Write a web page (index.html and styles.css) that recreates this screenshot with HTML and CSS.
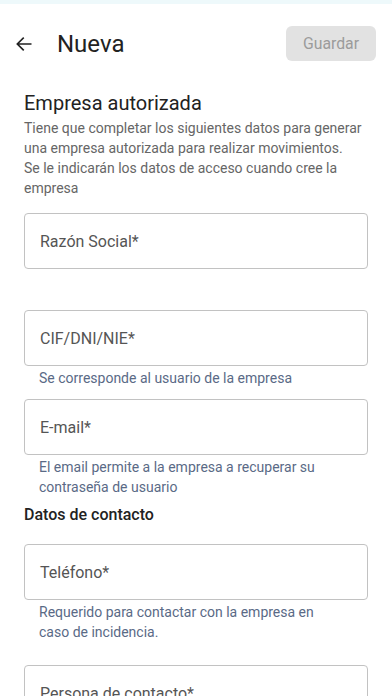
FILE: index.html
```html
<!DOCTYPE html>
<html lang="es">
<head>
<meta charset="utf-8">
<link rel="stylesheet" href="styles.css">
</head>
<body>
<div class="strip"></div>
<header class="bar">
  <div class="bar-left">
    <svg class="back" width="20" height="20" viewBox="0 0 24 24"><path d="M20 12H4.5M11 5l-7 7 7 7" fill="none" stroke="#222" stroke-width="2" stroke-linecap="square"/></svg>
    <h1 class="title">Nueva</h1>
  </div>
  <button class="save">Guardar</button>
</header>
<main class="content">
  <h2 class="section">Empresa autorizada</h2>
  <p class="desc">Tiene que completar los siguientes datos para generar<br>una empresa autorizada para realizar movimientos.<br>Se le indicarán los datos de acceso cuando cree la<br>empresa</p>

  <div class="field f-first"><span class="label">Razón Social*</span></div>

  <div class="field"><span class="label">CIF/DNI/NIE*</span></div>
  <p class="helper h-short">Se corresponde al usuario de la empresa</p>

  <div class="field"><span class="label">E-mail*</span></div>
  <p class="helper h-mid">El email permite a la empresa a recuperar su<br>contraseña de usuario</p>

  <h3 class="sub">Datos de contacto</h3>

  <div class="field"><span class="label">Teléfono*</span></div>
  <p class="helper h-long">Requerido para contactar con la empresa en<br>caso de incidencia.</p>

  <div class="field"><span class="label">Persona de contacto*</span></div>
</main>
</body>
</html>
```

FILE: styles.css
```css
html, body { margin: 0; padding: 0; background: #fff; }
body { font-family: Roboto, "Noto Sans", sans-serif; color: #222; width: 392px; height: 696px; overflow: hidden; }
.strip { height: 4px; background: #eef9fb; }
.bar { display: flex; justify-content: space-between; align-items: center; padding: 22px 16px 0 14px; height: 35px; }
.bar-left { display: flex; align-items: center; }
.back { display: block; }
.title { margin: 0 0 0 23px; font-size: 24px; font-weight: 400; color: #222; line-height: 28px; }
.save { font-family: inherit; font-size: 15.8px; color: #9b9b9b; background: #e2e2e2; border: none; border-radius: 6px; width: 90px; height: 35px; padding: 0; }
.content { padding: 30px 24px 0 24px; }
.section { margin: 0; font-size: 20px; font-weight: 400; line-height: 24px; color: #222; }
.desc { margin: 3px 0 0 0; font-size: 14px; line-height: 20px; color: #666; white-space: nowrap; }
.field { box-sizing: border-box; height: 56px; border: 1px solid #c2c2c2; border-radius: 4px; display: flex; align-items: center; padding-left: 15px; }
.f-first { margin-top: 15px; margin-bottom: 41px; }
.label { font-size: 16px; color: #555; }
.helper { margin: 2px 0 0 15px; font-size: 14px; line-height: 20px; color: #5a6a86; white-space: nowrap; }
.h-short { margin-bottom: 11px; }
.h-mid { margin-bottom: 8px; }
.h-long { margin-bottom: 23px; }
.sub { margin: 0 0 19px 0; font-size: 16px; font-weight: 500; line-height: 20px; color: #222; }
```
